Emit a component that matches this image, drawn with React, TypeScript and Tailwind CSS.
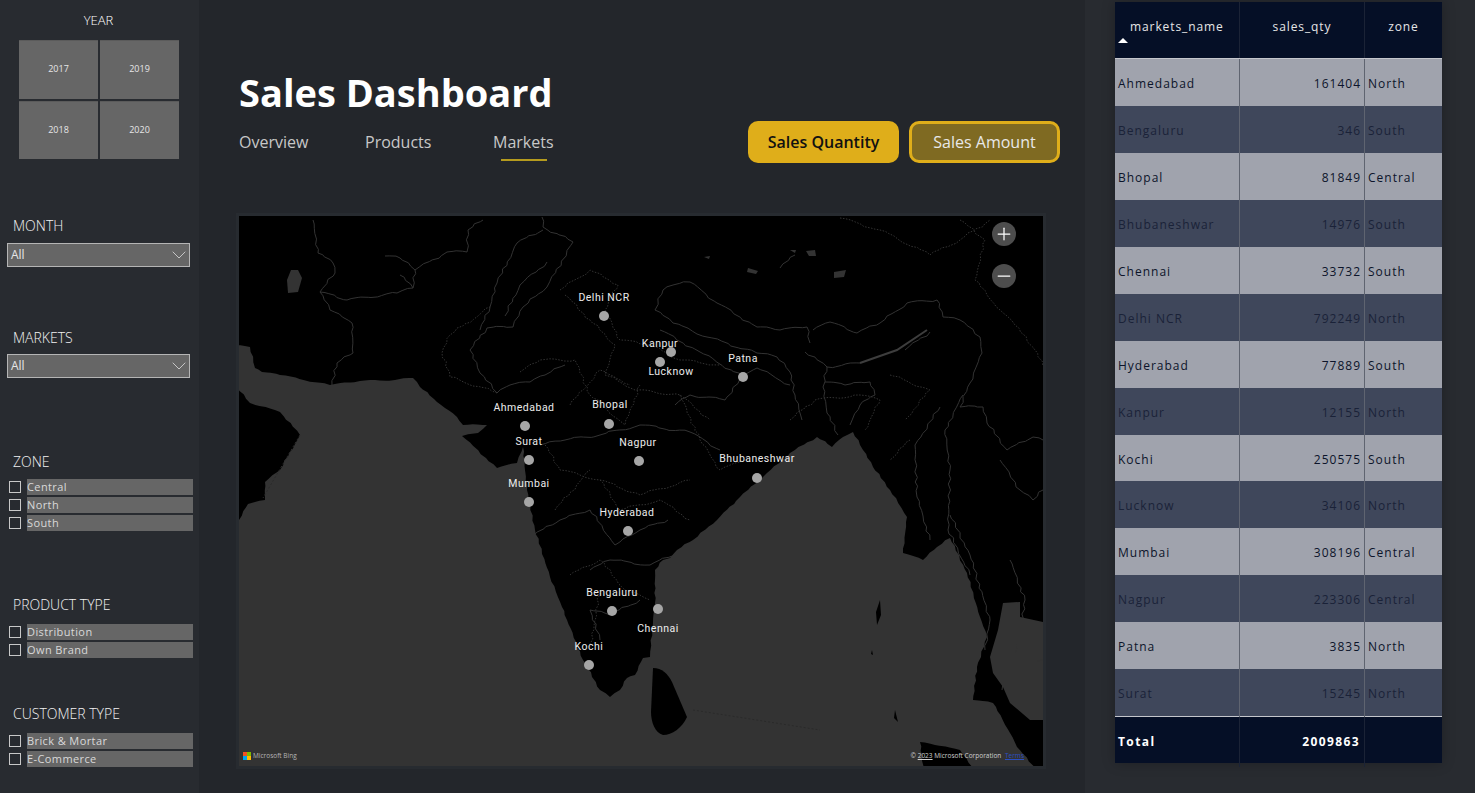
import { ChevronDown, Minus, Plus } from 'lucide-react';

const uiFont = "font-['Open_Sans','Noto_Sans',sans-serif]";

const rows = [
  ['Ahmedabad', '161404', 'North'],
  ['Bengaluru', '346', 'South'],
  ['Bhopal', '81849', 'Central'],
  ['Bhubaneshwar', '14976', 'South'],
  ['Chennai', '33732', 'South'],
  ['Delhi NCR', '792249', 'North'],
  ['Hyderabad', '77889', 'South'],
  ['Kanpur', '12155', 'North'],
  ['Kochi', '250575', 'South'],
  ['Lucknow', '34106', 'North'],
  ['Mumbai', '308196', 'Central'],
  ['Nagpur', '223306', 'Central'],
  ['Patna', '3835', 'North'],
  ['Surat', '15245', 'North'],
];

// x, y = dot centre, lx, ly = label centre, all relative to the map's top left
const pins = [
  { name: 'Delhi NCR', x: 365, y: 100, lx: 365, ly: 81 },
  { name: 'Kanpur', x: 432, y: 136, lx: 421, ly: 127 },
  { name: 'Lucknow', x: 421, y: 146, lx: 432, ly: 155 },
  { name: 'Patna', x: 504, y: 161, lx: 504, ly: 142 },
  { name: 'Ahmedabad', x: 286, y: 210, lx: 285, ly: 191 },
  { name: 'Bhopal', x: 370, y: 208, lx: 371, ly: 188 },
  { name: 'Surat', x: 290, y: 244, lx: 290, ly: 225 },
  { name: 'Nagpur', x: 400, y: 245, lx: 399, ly: 226 },
  { name: 'Bhubaneshwar', x: 518, y: 262, lx: 518, ly: 242 },
  { name: 'Mumbai', x: 290, y: 286, lx: 290, ly: 267 },
  { name: 'Hyderabad', x: 389, y: 315, lx: 388, ly: 296 },
  { name: 'Bengaluru', x: 373, y: 395, lx: 373, ly: 376 },
  { name: 'Chennai', x: 419, y: 393, lx: 419, ly: 412 },
  { name: 'Kochi', x: 350, y: 449, lx: 350, ly: 430 },
];

const solidLines = [
  'M313 220L318 253L333 263L335 273L320 292L330 310L352 323L353 353L337 363L332 385',
  'M320 292L347 300L397 293L413 288L415 270L447 252L467 252L468 230L483 220',
  'M413 288L400 275M385 256L400 258L415 270',
  'M497 393L480 373L470 350L487 328L513 327L523 307L547 287L573 242L543 227L542 217',
  'M497 283L517 243L543 230M490 307L497 283',
  'M505 316L520 285L547 262M480 330L490 307',
  'M497 393L510 385L530 382L545 375L565 365',
  'M655 310L663 290L673 285L690 282L717 303L757 327L780 330L807 327L810 343',
  'M813 330L830 322L857 333L880 323L907 303L937 300L943 317L960 320L980 337L982 353L970 383L960 407L983 407L987 423L1007 450L1033 437L1043 440',
  'M655 310L673 323L707 337L757 353L777 357L790 372L795 395L802 420',
  'M827 367L823 387L827 413L838 435M860 363L827 367L805 352',
  'M825 382L845 385L870 382L875 395L860 405L850 425',
  'M940 407L915 445L917 497L930 540M963 395L945 430L950 470L948 530L970 575',
  'M1000 460L1020 490L1033 500L1043 490M950 515L970 555L990 620L985 650',
  'M660 330L700 352L743 377L757 368L790 385',
  'M743 377L725 400L690 395L675 405',
  'M540 445L565 440L600 435L640 425L690 432L720 450',
  'M534 535L560 520L590 510L615 545L640 530L668 520',
  'M590 570L610 560L650 565L690 548M600 640L590 610L610 615L640 600',
  'M1010 560L1025 600L1020 640L1002 690M1043 660L1025 665',
  'M780 268L795 255M905 350L930 332',
];

const dottedLines = [
  'M497 393L450 377L442 353L450 335L490 307',
  'M560 290L590 270L618 285L605 310L620 340L650 345L680 360L720 365',
  'M565 295L590 320L615 345L605 375L630 385',
  'M520 372L540 360L575 360L590 395L625 425L640 385',
  'M570 405L600 370L635 390L680 395L710 420',
  'M680 395L700 440L720 470L745 460',
  'M545 445L560 470L600 480L640 495L690 480',
  'M555 510L590 470M600 480L620 510L660 500L690 520',
  'M570 575L600 560L625 590L650 600M600 590L590 650',
  'M790 420L815 400L860 395L880 400L865 430',
  'M890 375L930 390L905 420M910 440L890 460',
  'M960 220L985 240L975 280L1000 310L1015 325L1035 350L1043 366',
  'M840 218L880 230L930 255L960 240L990 220',
];

const lakes = [
  'M298 270L302 278L298 292L288 293L287 280L291 270Z',
  'M806 251L815 250L816 256L809 256Z',
  'M834 272L846 270L844 277L834 278Z',
  'M748 268L758 271L756 274L747 272Z',
  'M704 257L710 256L709 259Z',
  'M790 250L796 250L795 253Z',
];

// breaks long straight map segments into small uneven steps so they read like borders
function roughen(d: string, amount = 1.2) {
  return d.replace(/M([\d. L]+)/g, (_, body: string) => {
    const points = body.trim().split('L').map((p) => p.trim().split(' ').map(Number));
    let out = `M${points[0][0]} ${points[0][1]}`;
    for (let i = 1; i < points.length; i++) {
      const [x0, y0] = points[i - 1];
      const [x1, y1] = points[i];
      const steps = Math.max(1, Math.round(Math.hypot(x1 - x0, y1 - y0) / 5));
      for (let s = 1; s <= steps; s++) {
        const t = s / steps;
        const jx = s === steps ? 0 : Math.sin(x0 * 12.9 + s * 78.2) * amount;
        const jy = s === steps ? 0 : Math.sin(y0 * 37.7 + s * 43.1) * amount;
        out += `L${(x0 + (x1 - x0) * t + jx).toFixed(1)} ${(y0 + (y1 - y0) * t + jy).toFixed(1)}`;
      }
    }
    return out;
  });
}

// left and bottom runs sit past the viewBox so the jitter stays out of sight
const coast =
  'M230 345L250 347L255 368L262 372L280 375L330 385L360 381L395 380L413 378L420 387L437 402L445 408L457 417L463 425L487 425L478 433L462 436L497 468L517 463L523 447L527 490L535 530L550 577L562 607L567 620L583 660L600 690L610 697L620 690L627 678L635 675L643 658L650 657L652 630L655 603L655 570L663 560L670 558L677 550L693 540L717 520L740 497L763 477L790 453L817 437L832 447L843 437L853 432L863 450L873 467L890 490L907 517L903 553L923 560L937 547L950 538L967 573L980 617L987 637L977 667L973 700L993 703L1010 733L1017 747L1045 780L975 772L960 750L935 745L920 742L925 780L225 780L225 540L239 520L248 504L265 500L265 482L280 470L300 435L280 412L250 403L230 380';

function WorldMap() {
  return (
    <svg viewBox="239 216 804 550" className="absolute inset-0 h-full w-full">
      <rect x="239" y="216" width="804" height="550" fill="#000" />
      <path fill="#333333" d={`${roughen(coast, 0.7)}Z`} />
      <path fill="#333333" d="M1003 603L1020 602L1020 617L1043 622L1043 720L1030 720L1010 703L1003 687L993 673L990 657L998 630Z" />
      <path fill="#000" d="M653 668C662 668 668 674 672 682L687 717C682 728 672 735 663 735C655 733 651 722 651 712Z" />
      <path fill="#000" d="M880 600L881 615L877 625L876 612ZM872 650L873 655L871 654ZM895 710L898 722L894 718Z" />
      {lakes.map((d) => (
        <path key={d} d={d} fill="#333333" />
      ))}
      <g fill="none" stroke="#333333" strokeWidth="1" strokeLinejoin="round">
        {solidLines.map((d) => (
          <path key={d} d={roughen(d)} />
        ))}
      </g>
      <g fill="none" stroke="#333333" strokeWidth="1" strokeDasharray="1.5 1.5">
        {dottedLines.map((d) => (
          <path key={d} d={roughen(d)} />
        ))}
      </g>
      <path d="M860 363L897 350L927 330" fill="none" stroke="#3d3d3d" strokeWidth="2" />
      <path d="M300 435L263 498M693 710L820 730" fill="none" stroke="#2a2a2a" strokeWidth="1" strokeDasharray="2 2" />
    </svg>
  );
}

function Slicer({ title, options, className, listClass }: { title: string; options: string[]; className: string; listClass: string }) {
  return (
    <section className={className}>
      <h3 className="pl-[13px] text-[14px] leading-[19px] font-light text-[#f2f2f2]">{title}</h3>
      <ul className={`flex flex-col gap-[2px] ${listClass}`}>
        {options.map((option) => (
          <li key={option} className="flex h-4 items-center pl-[9px] pr-[6px]">
            <span className="h-3 w-3 shrink-0 border border-[#c8c8c8]" />
            <span className="ml-[6px] h-4 flex-1 bg-[#666666] text-[11px] leading-4 tracking-[0.4px] text-[#d9d9d9]">
              {option}
            </span>
          </li>
        ))}
      </ul>
    </section>
  );
}

function Dropdown({ title, className, boxClass }: { title: string; className: string; boxClass: string }) {
  return (
    <section className={className}>
      <h3 className="pl-[13px] text-[14px] leading-[19px] font-light text-[#f2f2f2]">{title}</h3>
      <div className={`ml-[7px] flex h-6 w-[183px] items-center justify-between border border-[#b5b5b5] bg-[#666666] px-[3px] text-[12px] text-[#e6e6e6] ${boxClass}`}>
        All
        <ChevronDown className="-mr-[5px] h-6 w-6 text-[#e6e6e6]" strokeWidth={0.75} />
      </div>
    </section>
  );
}

function Sidebar() {
  return (
    <aside className="h-full w-[199px] shrink-0 bg-[#282b30] pt-[10px]">
      <h3 className="pr-[2px] text-center text-[13px] leading-5 font-light text-white">YEAR</h3>
      <div className="mt-[10px] ml-[19px] grid w-[160px] grid-cols-2 grid-rows-[59px_58px] gap-x-[2px] gap-y-[2px] text-[9px] text-[#e6e6e6]">
        {['2017', '2019', '2018', '2020'].map((year) => (
          <div key={year} className="flex items-center justify-center border-t border-[#5b5b5b] bg-[#666666] pb-[2px]">
            {year}
          </div>
        ))}
      </div>
      <Dropdown title="MONTH" className="mt-[57px]" boxClass="mt-[8px]" />
      <Dropdown title="MARKETS" className="mt-[61px]" boxClass="mt-[7px]" />
      <Slicer title="ZONE" options={['Central', 'North', 'South']} className="mt-[74px]" listClass="mt-[8px]" />
      <Slicer title="PRODUCT TYPE" options={['Distribution', 'Own Brand']} className="mt-[64px]" listClass="mt-[10px]" />
      <Slicer title="CUSTOMER TYPE" options={['Brick & Mortar', 'E-Commerce']} className="mt-[46px]" listClass="mt-[10px]" />
    </aside>
  );
}

function Header() {
  return (
    <header className="flex h-[213px] flex-col pl-[40px] pr-[25px] pt-[64px]">
      <h1 className="text-[38px] leading-[56px] font-bold text-white">Sales Dashboard</h1>
      <div className="mt-[1px] flex items-start justify-between">
        <nav className="mt-[10px] flex text-[16px] leading-[22px] text-[#c8c8c8]">
          <span className="w-[126px]">Overview</span>
          <span className="w-[128px]">Products</span>
          <span className="relative">
            Markets
            <span className="absolute top-[28px] left-[8px] h-[2px] w-[46px] bg-[#b59b1e]" />
          </span>
        </nav>
        <div className="flex gap-[10px]">
          <button className="h-[42px] w-[151px] rounded-[10px] bg-[#dfae1a] text-[16px] font-semibold text-[#111111]">
            Sales Quantity
          </button>
          <button className="h-[42px] w-[151px] rounded-[10px] border-[3px] border-[#dfae1a] bg-[#7f6a22] text-[16px] text-[#e8e8e8]">
            Sales Amount
          </button>
        </div>
      </div>
    </header>
  );
}

function MapPanel() {
  return (
    <div className="ml-[37px] w-[810px] border-[3px] border-[#272b30]">
      <div className="relative h-[550px] w-[804px] overflow-hidden bg-black">
        <WorldMap />
        {pins.map((pin) => (
          <div key={pin.name}>
            <span
              className="absolute h-[10px] w-[10px] -translate-x-1/2 -translate-y-1/2 rounded-full bg-[#a6a6a6]"
              style={{ left: pin.x, top: pin.y }}
            />
            <span
              className="absolute -translate-x-1/2 -translate-y-1/2 font-['Roboto',sans-serif] text-[10.5px] tracking-[0.5px] whitespace-nowrap text-[#ededed]"
              style={{ left: pin.lx, top: pin.ly + 1 }}
            >
              {pin.name}
            </span>
          </div>
        ))}
        <button className="absolute top-[6px] right-[27px] flex h-6 w-6 items-center justify-center rounded-full bg-[#4d4d4d] text-white">
          <Plus className="h-5 w-5" strokeWidth={1.5} />
        </button>
        <button className="absolute top-[48px] right-[27px] flex h-6 w-6 items-center justify-center rounded-full bg-[#4d4d4d] text-white">
          <Minus className="h-5 w-5" strokeWidth={1.5} />
        </button>
        <div className="absolute bottom-[6px] left-[4px] flex items-center gap-[2px] text-[6.5px] leading-[9px] text-[#b5b5b5]">
          <span className="grid h-[8px] w-[8px] grid-cols-2">
            <i className="bg-[#f25022]" />
            <i className="bg-[#7fba00]" />
            <i className="bg-[#00a4ef]" />
            <i className="bg-[#ffb900]" />
          </span>
          Microsoft Bing
        </div>
        <div className="absolute right-[19px] bottom-[6px] text-[6.5px] leading-[9px] whitespace-nowrap text-[#d0d0d0]">
          © <span className="underline">2023</span> Microsoft Corporation{' '}
          <span className="ml-[2px] text-[#2b4fc0] underline">Terms</span>
        </div>
      </div>
    </div>
  );
}

function SalesTable() {
  return (
    <div className="mt-[2px] ml-[30px] w-[327px] shadow-[0_0_12px_rgba(0,0,0,0.25)]">
      <div className="grid h-[56px] grid-cols-[125px_125px_77px] bg-[#050f26] text-[12px] tracking-[0.9px] text-[#e6e6e6]">
        <div className="relative border-r border-[#1b2336] pt-[16px] pl-[15px]">
          markets_name
          <span className="absolute top-[36px] left-[3px] h-0 w-0 border-x-[5px] border-b-[5px] border-x-transparent border-b-white" />
        </div>
        <div className="border-r border-[#1b2336] pt-[16px] text-center">sales_qty</div>
        <div className="pt-[16px] text-center">zone</div>
      </div>
      <div className="border-t border-[#c4c6cc]">
        {rows.map((row, i) => (
          <div
            key={row[0]}
            className={`grid h-[46.95px] grid-cols-[125px_125px_77px] items-stretch text-[12px] leading-[50px] tracking-[1px] ${
              i % 2 === 0 ? 'bg-[#a0a3ad] text-[#0c142a]' : 'bg-[#3f475b] text-[#1a2238]'
            }`}
          >
            <div className="border-r border-[#5f6470] pl-[3px]">{row[0]}</div>
            <div className="border-r border-[#5f6470] pr-[3px] text-right">{row[1]}</div>
            <div className="pl-[3px]">{row[2]}</div>
          </div>
        ))}
      </div>
      <div className="grid h-[47px] grid-cols-[125px_125px_77px] border-t border-[#c4c6cc] bg-[#050f26] text-[12px] leading-[50px] font-bold tracking-[1.4px] text-white">
        <div className="border-r border-[#1b2336] pl-[3px]">Total</div>
        <div className="border-r border-[#1b2336] pr-[4px] text-right">2009863</div>
        <div />
      </div>
    </div>
  );
}

export default function App() {
  return (
    <div className={`flex h-[793px] w-[1475px] overflow-hidden bg-[#23262b] ${uiFont}`}>
      <Sidebar />
      <main className="h-full w-[886px] shrink-0">
        <Header />
        <MapPanel />
      </main>
      <div className="h-full flex-1 bg-[#282b30]">
        <SalesTable />
      </div>
    </div>
  );
}
